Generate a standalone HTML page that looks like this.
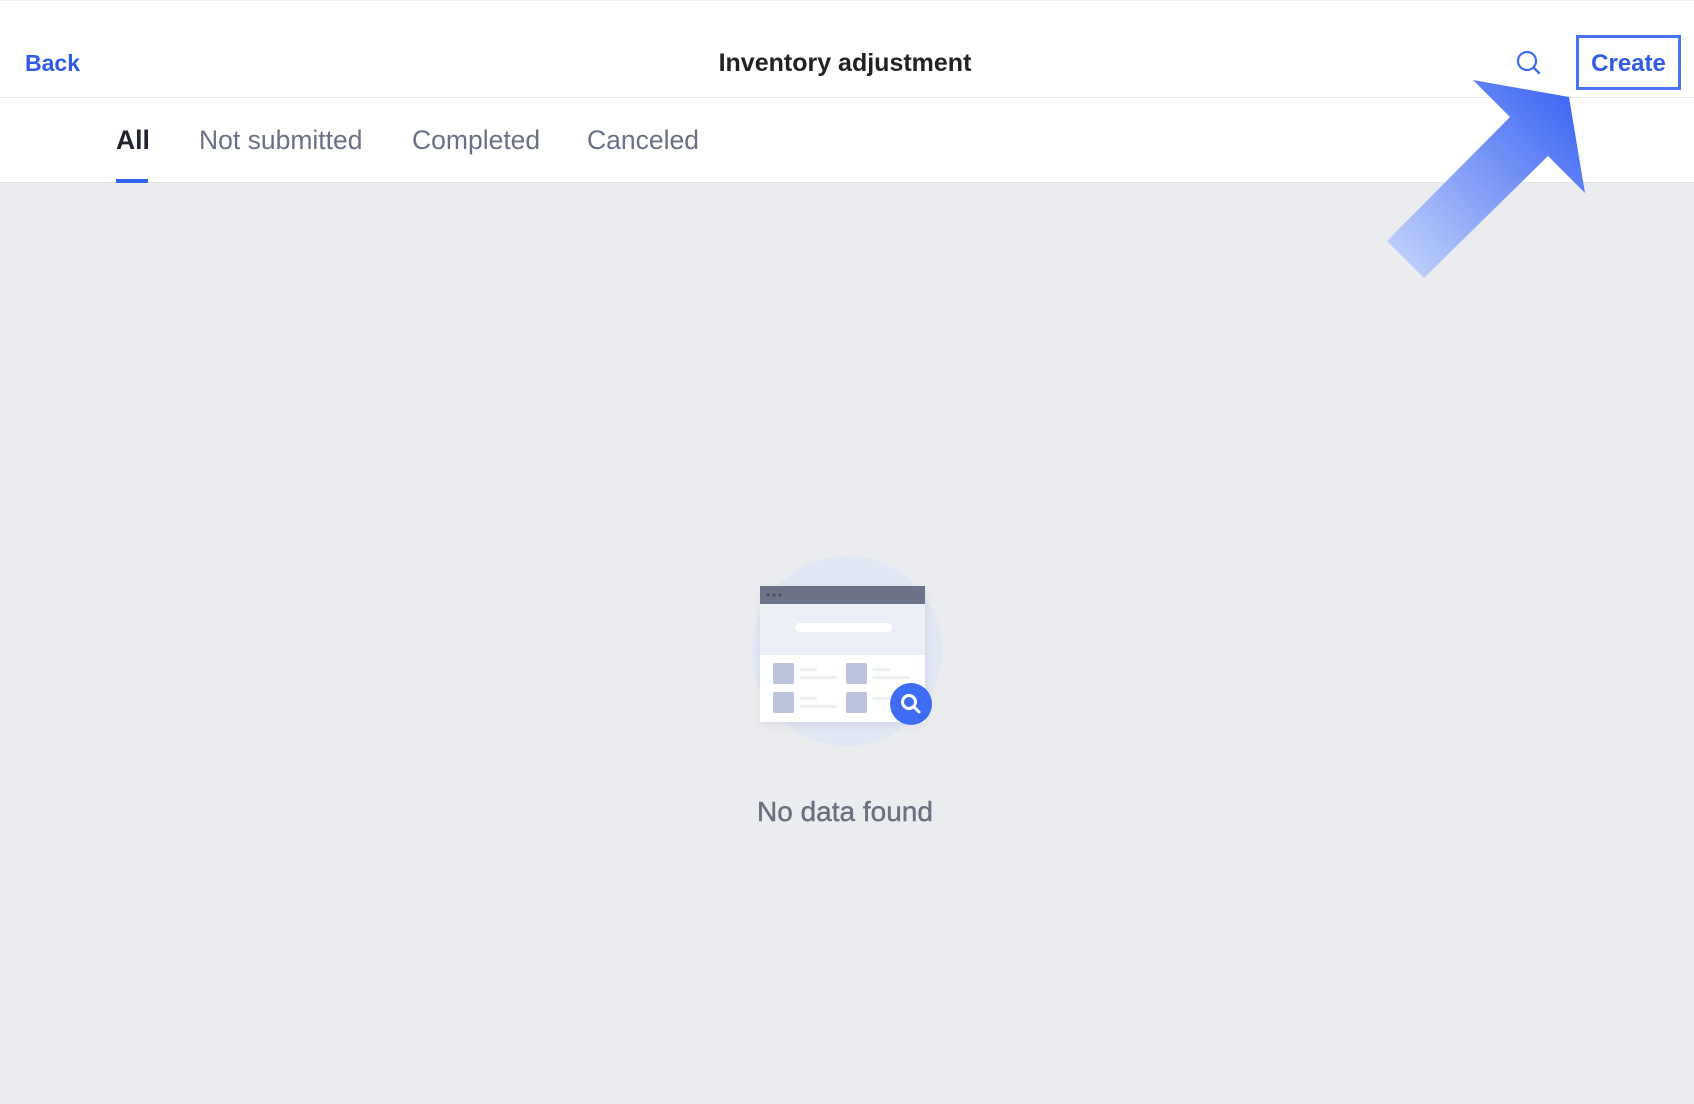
<!DOCTYPE html>
<html><head><meta charset="utf-8"><style>
body{margin:0;width:1694px;height:1104px;background:#ebecf0;font-family:"Liberation Sans",sans-serif;position:relative;overflow:hidden}
.hdr{position:absolute;left:0;top:0;width:1694px;height:98px;background:#fff;border-top:1px solid #eee;border-bottom:1px solid #e6e7ea;box-sizing:border-box}
.tabs{position:absolute;left:0;top:98px;width:1694px;height:85px;background:#fff;border-bottom:1px solid #e0e1e5;box-sizing:border-box}
.t{position:absolute;top:124px;font-size:26.5px;color:#6b7184;line-height:32px}
</style></head><body>
<div class="hdr"></div>
<div class="tabs"></div>
<div style="position:absolute;left:25px;top:48px;font-size:23px;font-weight:bold;color:#2f5be7;line-height:30px">Back</div>
<div style="position:absolute;left:0;width:1690px;top:47px;text-align:center;font-size:25px;font-weight:bold;color:#222;line-height:32px">Inventory adjustment</div>
<svg style="position:absolute;left:1514px;top:48px" width="32" height="32" viewBox="0 0 32 32"><circle cx="13" cy="13" r="9" fill="none" stroke="#3f6bef" stroke-width="2.2"/><line x1="19.5" y1="19.5" x2="25" y2="25" stroke="#3f6bef" stroke-width="2.4" stroke-linecap="round"/></svg>
<div style="position:absolute;left:1576px;top:35px;width:105px;height:55px;border:3.5px solid #4a72f5;box-sizing:border-box;display:flex;align-items:center;justify-content:center;font-size:24px;font-weight:bold;color:#2f5be7;padding-top:2px">Create</div>
<div class="t" style="left:116px;color:#1f2230;font-weight:bold">All</div>
<div style="position:absolute;left:116px;top:179px;width:32px;height:4px;background:#3563ee"></div>
<div class="t" style="left:199px">Not submitted</div>
<div class="t" style="left:412px">Completed</div>
<div class="t" style="left:587px">Canceled</div>
<svg style="position:absolute;left:0;top:0" width="1694" height="300"><defs><linearGradient id="g" x1="1390" y1="270" x2="1570" y2="100" gradientUnits="userSpaceOnUse"><stop offset="0" stop-color="#c5d5fb"/><stop offset="1" stop-color="#4068f3"/></linearGradient></defs>
<polygon points="1569,97 1585,193 1548,156 1424,278 1387,241 1510,117 1473,80" fill="url(#g)"/></svg>
<svg style="position:absolute;left:720px;top:530px" width="260" height="250" viewBox="720 530 260 250">
<defs><filter id="s"><feGaussianBlur stdDeviation="5"/></filter></defs>
<circle cx="847" cy="651" r="95" fill="#e2e7f5"/>
<rect x="762" y="590" width="163" height="134" fill="#000" opacity="0.08" filter="url(#s)"/>
<rect x="760" y="586" width="165" height="136" fill="#fff"/>
<rect x="760" y="603" width="165" height="52" fill="#eceff6"/>
<rect x="760" y="586" width="165" height="18" fill="#6c7389"/>
<circle cx="768" cy="595" r="1.6" fill="#4a5066"/><circle cx="774" cy="595" r="1.6" fill="#4a5066"/><circle cx="780" cy="595" r="1.6" fill="#4a5066"/>
<rect x="795" y="623" width="97" height="9" rx="4.5" fill="#fff"/>
<g fill="#bcc3dc"><rect x="773" y="663" width="21" height="21" rx="2"/><rect x="846" y="663" width="21" height="21" rx="2"/><rect x="773" y="692" width="21" height="21" rx="2"/><rect x="846" y="692" width="21" height="21" rx="2"/></g>
<g fill="#edf0f6"><rect x="800" y="668" width="17" height="3"/><rect x="800" y="676" width="37" height="3"/><rect x="873" y="668" width="17" height="3"/><rect x="873" y="676" width="37" height="3"/><rect x="800" y="697" width="17" height="3"/><rect x="800" y="705" width="37" height="3"/><rect x="873" y="697" width="17" height="3"/></g>
<circle cx="911" cy="704" r="21" fill="#3e6cf4"/>
<circle cx="909" cy="702" r="6.5" fill="none" stroke="#fff" stroke-width="3"/><line x1="914" y1="707" x2="919" y2="712" stroke="#fff" stroke-width="3" stroke-linecap="round"/>
</svg>
<div style="position:absolute;left:0;width:1690px;top:795px;text-align:center;font-size:28px;color:#6b7080;line-height:34px;-webkit-text-stroke:0.4px #6b7080">No data found</div>
</body></html>
